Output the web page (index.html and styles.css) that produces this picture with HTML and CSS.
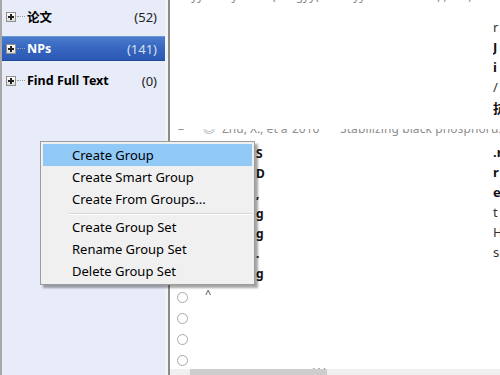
FILE: index.html
```html
<!DOCTYPE html>
<html>
<head>
<meta charset="utf-8">
<link rel="stylesheet" href="styles.css">
</head>
<body>
<div class="app">
  <aside class="groups">
    <div class="group">
      <span class="exp"></span><span class="dots"></span>
      <span class="name">论文</span><span class="count">(52)</span>
    </div>
    <div class="group selected">
      <span class="exp"></span><span class="dots"></span>
      <span class="name">NPs</span><span class="count">(141)</span>
    </div>
    <div class="group">
      <span class="exp"></span><span class="dots"></span>
      <span class="name">Find Full Text</span><span class="count">(0)</span>
    </div>
  </aside>
  <div class="split"></div>
  <main class="refs">
    <div class="topstrip"><span class="clipline">^ &nbsp; yy &nbsp; &nbsp; &nbsp; &nbsp; y &nbsp; &nbsp; &nbsp; &nbsp; &nbsp; (/ &nbsp; &nbsp; gyy( &nbsp; &nbsp; &nbsp; &nbsp; &nbsp; yy &nbsp; &nbsp; &nbsp; &nbsp; &nbsp; &nbsp; &nbsp; &nbsp; &nbsp; &nbsp; &nbsp; , , &nbsp; &nbsp; &nbsp; ,</span></div>
    <div class="row"><span class="mid"></span><span class="edge thin">r</span></div>
    <div class="row"><span class="mid"></span><span class="edge">J</span></div>
    <div class="row"><span class="mid"></span><span class="edge">i</span></div>
    <div class="row"><span class="mid"></span><span class="edge thin">/</span></div>
    <div class="row"><span class="mid"></span><span class="edge">抗</span></div>
    <div class="row zhu">
      <div class="zclip"><span class="zdash">–</span><span class="zicon">◎</span><span class="zauthor">Zhu, X.; et al.</span><span class="zyear">2016</span><span class="ztext">Stabilizing black phosphorus nanosheets</span></div>
    </div>
    <div class="row"><span class="mid"><b class="peek">S</b></span><span class="edge">.r</span></div>
    <div class="row"><span class="mid"><b class="peek">D</b></span><span class="edge">r</span></div>
    <div class="row"><span class="mid"><b class="peek">,</b></span><span class="edge">et</span></div>
    <div class="row"><span class="mid"><b class="peek">g</b></span><span class="edge thin">t</span></div>
    <div class="row"><span class="mid"><b class="peek">g</b></span><span class="edge thin">H</span></div>
    <div class="row"><span class="mid"><b class="peek">.</b></span><span class="edge thin">se</span></div>
    <div class="row"><span class="mid"><b class="peek">g</b></span><span class="edge"></span></div>
    <div class="row radio first-radio"><span class="circle"></span><span class="caret">^</span></div>
    <div class="row radio"><span class="circle"></span></div>
    <div class="row radio"><span class="circle"></span></div>
    <div class="row radio last-radio"><span class="circle"></span><span class="frag">- &nbsp; &nbsp; &nbsp; &nbsp; &nbsp; &nbsp; &nbsp; &nbsp; g, &nbsp; &nbsp; &nbsp; &nbsp; &nbsp; &nbsp; &nbsp; &nbsp; ' ' '</span></div>
    <div class="hscroll"><div class="thumb"></div></div>
  </main>
  <div class="menu">
    <div class="item hot">Create Group</div>
    <div class="item">Create Smart Group</div>
    <div class="item">Create From Groups...</div>
    <div class="sep"></div>
    <div class="item">Create Group Set</div>
    <div class="item">Rename Group Set</div>
    <div class="item">Delete Group Set</div>
  </div>
</div>
</body>
</html>
```

FILE: styles.css
```css
html, body {
  margin: 0;
  padding: 0;
  background: #ffffff;
}
.app {
  position: relative;
  display: flex;
  width: 500px;
  height: 375px;
  overflow: hidden;
  font-family: "Noto Sans", "Noto Sans CJK SC", sans-serif;
}
.groups {
  width: 163px;
  flex: none;
  background: #e7ecf8;
  border-left: 2px solid #a8a8a8;
  padding-top: 4px;
  display: flex;
  flex-direction: column;
  gap: 7px;
  box-sizing: content-box;
}
.group {
  height: 25px;
  display: flex;
  align-items: center;
  font-size: 12.5px;
  color: #000;
  padding-right: 8px;
}
.exp {
  width: 8px;
  height: 8px;
  margin-left: 4px;
  border: 1px solid #8e8f8f;
  background: linear-gradient(#ffffff, #dcdcdc);
  position: relative;
  flex: none;
}
.exp::before {
  content: "";
  position: absolute;
  left: 1px; top: 3px;
  width: 6px; height: 2px;
  background: #222;
}
.exp::after {
  content: "";
  position: absolute;
  left: 3px; top: 1px;
  width: 2px; height: 6px;
  background: #222;
}
.dots {
  width: 8px;
  margin-left: 1px;
  border-top: 1px dotted #a0a0a0;
  flex: none;
}
.name {
  font-weight: bold;
  margin-left: 2px;
  flex: 1;
}
.count {
  color: #222;
  font-size: 13px;
}
.group.selected {
  background: linear-gradient(#4a7ccc 0%, #3867c0 45%, #2a58b3 100%);
  border-top: 1px solid #6c95d8;
  border-bottom: 1px solid #1f4a9e;
  height: 23px;
}
.group.selected .name { color: #ffffff; }
.group.selected .count { color: #d6e0f2; }
.split {
  width: 3px;
  flex: none;
  background: #f3f3f3;
  border-right: 2px solid #8a8a8a;
}
.refs {
  flex: 1;
  display: flex;
  flex-direction: column;
  font-size: 12px;
  min-width: 0;
  position: relative;
}
.topstrip {
  height: 4px;
  flex: none;
  overflow: hidden;
  margin-bottom: 13px;
}
.clipline {
  display: block;
  margin-top: -11px;
  padding-left: 5px;
  color: #888;
  white-space: nowrap;
  font-size: 12px;
  line-height: 14px;
}
.row {
  height: 20px;
  flex: none;
  display: flex;
  align-items: center;
  white-space: nowrap;
}
.mid {
  flex: 1;
  position: relative;
  height: 100%;
}
.peek {
  position: absolute;
  left: 86px;
  top: 3px;
  font-size: 12px;
  color: #111;
}
.edge {
  width: 7px;
  overflow: hidden;
  font-weight: bold;
  color: #111;
  font-size: 13px;
}
.edge.thin {
  font-weight: normal;
  color: #333;
}
.row.zhu {
  height: 25px;
  align-items: flex-start;
}
.zclip {
  flex: 1;
  min-width: 0;
  margin-top: 12px;
  height: 8px;
  overflow: hidden;
  display: flex;
  color: #8e8e8e;
  font-size: 12px;
  line-height: 14px;
}
.zclip > span {
  flex: none;
  margin-top: -7px;
}
.zdash { margin-left: 8px; width: 25px; }
.zicon { width: 19px; color: #777; }
.zauthor { width: 66px; overflow: hidden; }
.zyear { width: 52px; padding-left: 4px; box-sizing: border-box; }
.ztext { letter-spacing: 0.1px; }
.row.radio {
  height: 21px;
  position: relative;
  align-items: flex-start;
}
.row.radio.first-radio { margin-top: 5px; }
.row.radio.last-radio { height: 19px; }
.circle {
  width: 9px;
  height: 9px;
  border: 1px solid #a8a8a8;
  border-radius: 50%;
  margin-left: 7px;
  margin-top: 5px;
  flex: none;
}
.caret {
  position: absolute;
  left: 35px;
  top: -1px;
  color: #444;
  font-size: 11px;
}
.frag {
  position: absolute;
  left: 32px;
  top: 14px;
  color: #777;
  font-size: 11px;
  height: 5px;
  overflow: hidden;
}
.hscroll {
  margin-top: auto;
  height: 6px;
  flex: none;
  background: #f0f0f0;
  padding-left: 20px;
}
.thumb {
  width: 137px;
  height: 100%;
  background: #cdcdcd;
}
.menu {
  position: absolute;
  left: 40px;
  top: 141px;
  width: 209px;
  padding: 2px;
  background: #f0f0f0;
  border: 1px solid #9c9c9c;
  box-shadow: 3px 3px 2px rgba(0, 0, 0, 0.35);
  font-family: "Noto Sans", sans-serif;
  font-size: 13px;
  color: #000;
}
.item {
  height: 22px;
  line-height: 22px;
  padding-left: 29px;
  white-space: nowrap;
}
.item.hot {
  background: #91c9f7;
}
.sep {
  height: 1px;
  background: #d7d7d7;
  margin: 3px 0 1px 26px;
  border-bottom: 1px solid #ffffff;
}
```
